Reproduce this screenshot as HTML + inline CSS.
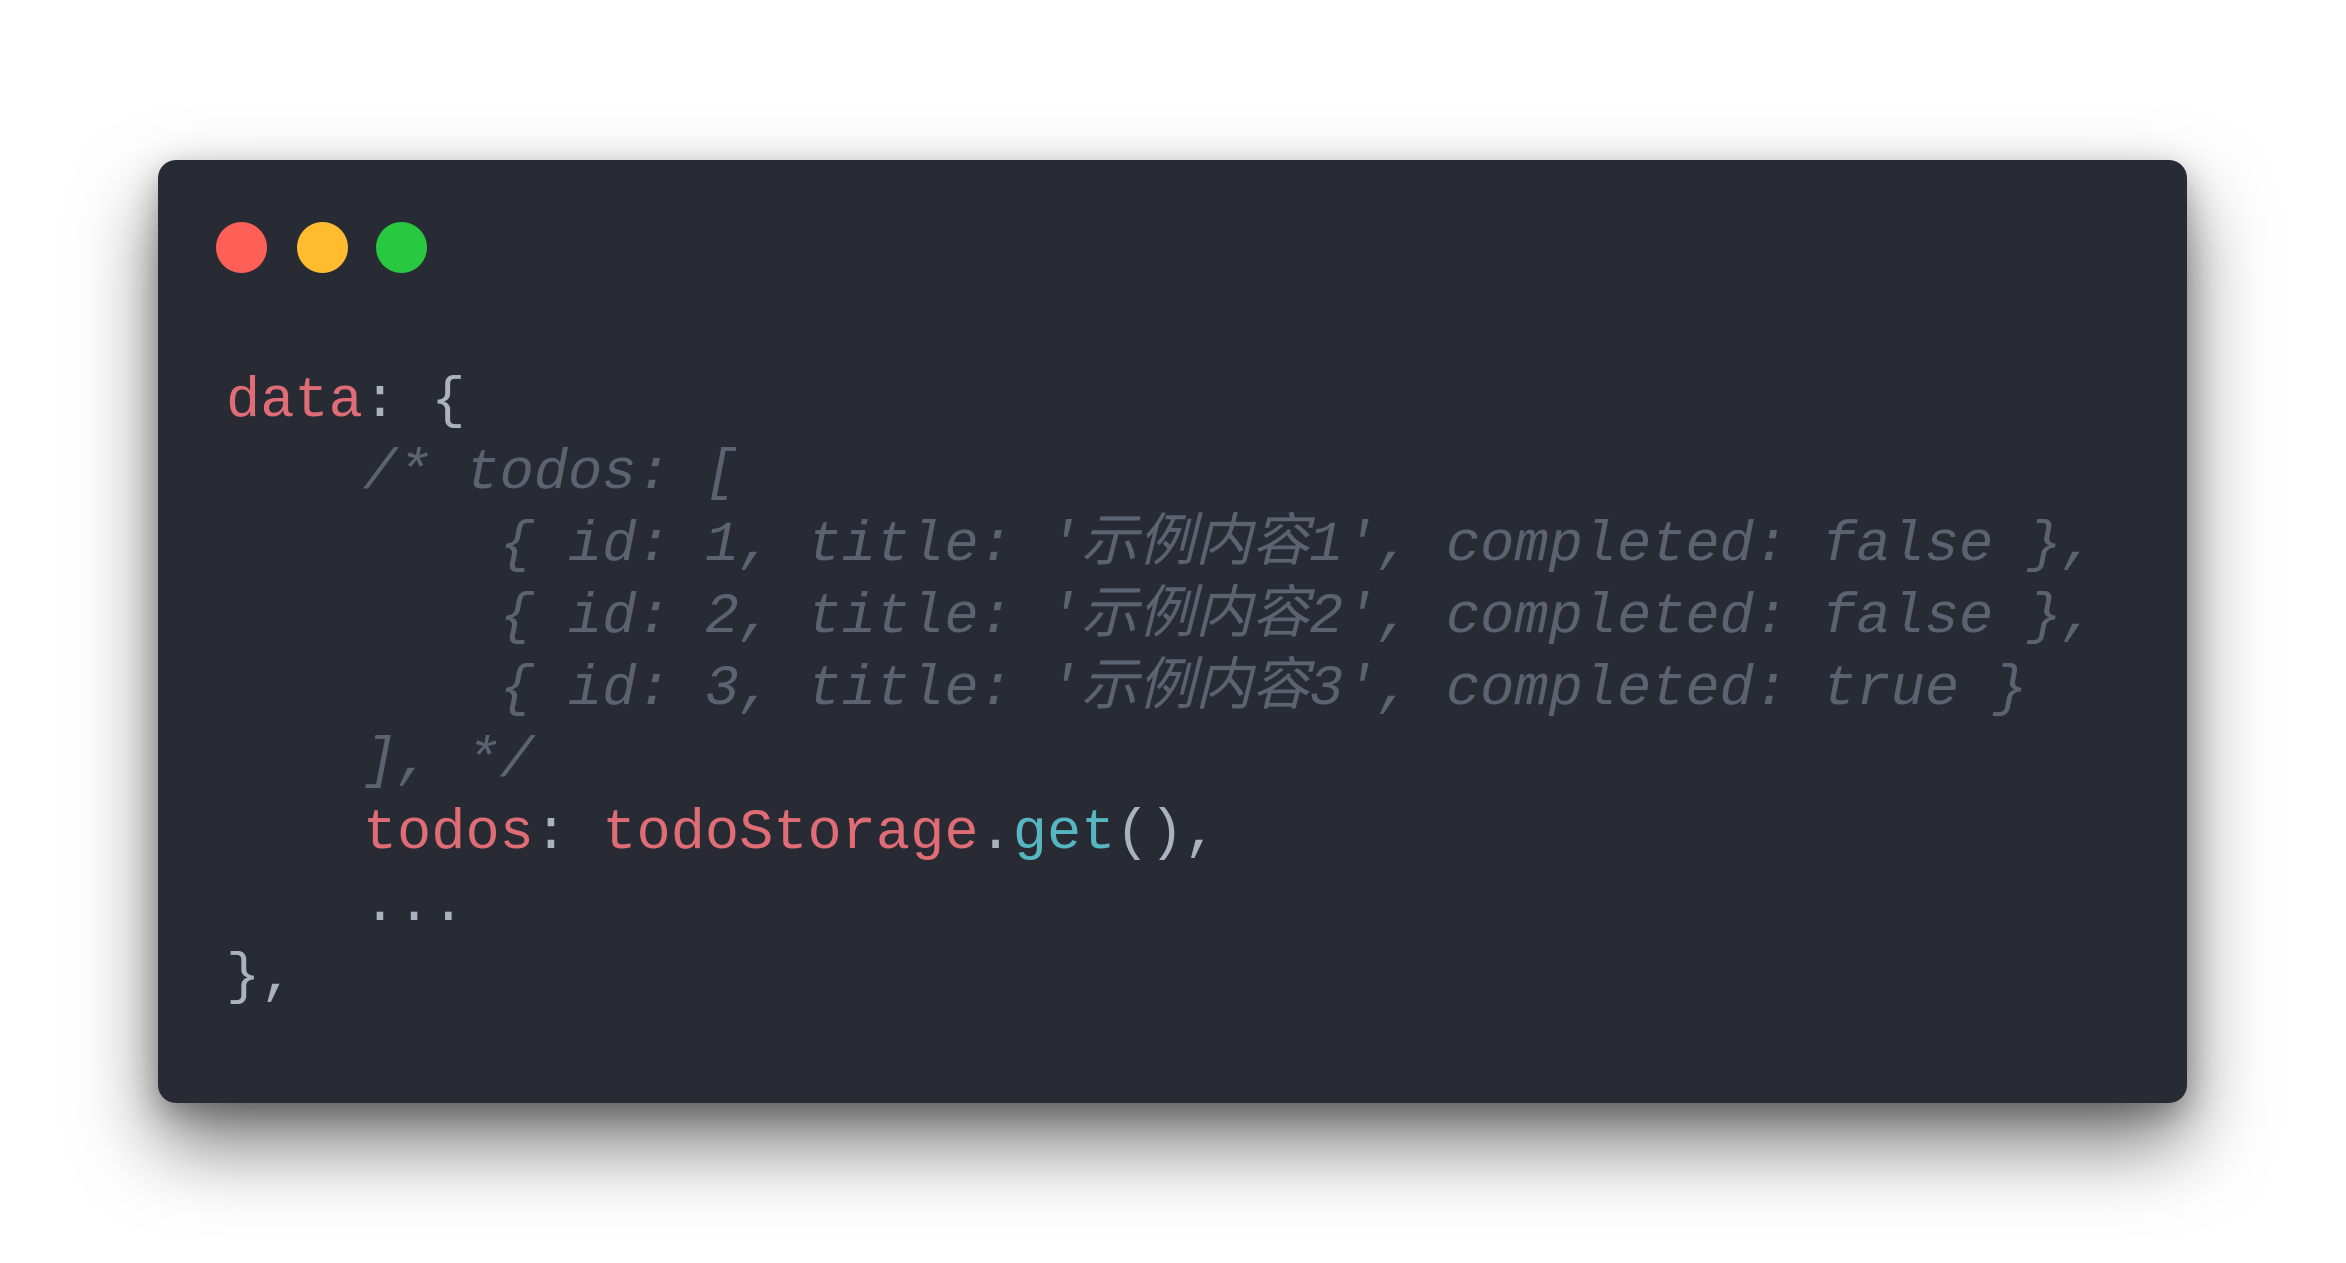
<!DOCTYPE html>
<html><head><meta charset="utf-8"><style>
html,body{margin:0;padding:0;background:#fff;width:2346px;height:1263px;overflow:hidden}
.win{position:absolute;left:158px;top:160px;width:2029px;height:943px;background:#282b34;border-radius:18px;box-shadow:0 40px 80px rgba(0,0,0,0.55),0 10px 30px rgba(0,0,0,0.25)}
.dot{position:absolute;top:222px;width:51px;height:51px;border-radius:50%}
.code{position:absolute;left:226px;top:366px;font-family:"Liberation Mono","Noto Sans CJK SC",monospace;font-size:57px;line-height:72px;white-space:pre;color:#abb2bf}
.r{color:#e06c75}.c{color:#5c6370;font-style:italic}.b{color:#56b6c2}
</style></head><body>
<div class="win"></div>
<div class="dot" style="left:216px;background:#fe5f57"></div>
<div class="dot" style="left:297px;background:#febc2e"></div>
<div class="dot" style="left:376px;background:#28c840"></div>
<div class="code"><span class="r">data</span>: {
<span class="c">    /* todos: [
        { id: 1, title: '示例内容1', completed: false },
        { id: 2, title: '示例内容2', completed: false },
        { id: 3, title: '示例内容3', completed: true }
    ], */</span>
    <span class="r">todos</span>: <span class="r">todoStorage</span>.<span class="b">get</span>(),
    ...
},</div>
</body></html>
